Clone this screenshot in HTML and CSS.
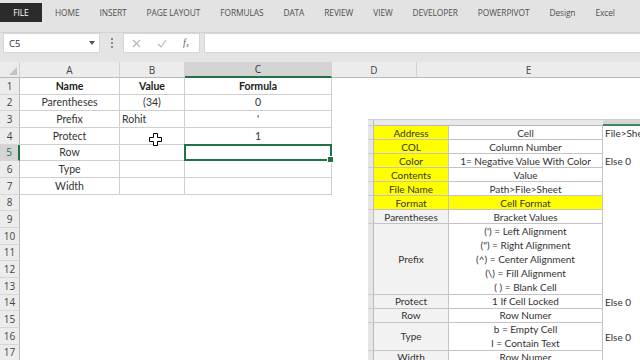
FILE: index.html
```html
<!DOCTYPE html>
<html>
<head>
<meta charset="utf-8">
<link rel="stylesheet" href="styles.css">
</head>
<body>
<div class="app">
  <div class="tabs">
    <div class="tab file">FILE</div>
    <div class="tab">HOME</div>
    <div class="tab">INSERT</div>
    <div class="tab">PAGE LAYOUT</div>
    <div class="tab">FORMULAS</div>
    <div class="tab">DATA</div>
    <div class="tab">REVIEW</div>
    <div class="tab">VIEW</div>
    <div class="tab">DEVELOPER</div>
    <div class="tab">POWERPIVOT</div>
    <div class="tab">Design</div>
    <div class="tab">Excel</div>
  </div>
  <div class="fbar">
    <div class="namebox"><span>C5</span><svg class="dd" width="6" height="4" viewBox="0 0 6 4"><path d="M0 0h6L3 4z" fill="#555"/></svg></div>
    <div class="dots"><span></span><span></span><span></span></div>
    <div class="fbtns">
      <svg width="9" height="9" viewBox="0 0 9 9"><path d="M1 1l7 7M8 1l-7 7" stroke="#b5b5b5" stroke-width="1.1"/></svg>
      <svg width="10" height="9" viewBox="0 0 10 9"><path d="M1 5l3 3 5-7" stroke="#b5b5b5" stroke-width="1.1" fill="none"/></svg>
      <span class="fx">f<sub>x</sub></span>
    </div>
    <div class="finput"></div>
  </div>
  <div class="sheet">
    <div class="grid">
      <div class="ch corner"><svg width="8" height="8" viewBox="0 0 8 8"><path d="M8 0v8H0z" fill="#c4c4c4"/></svg></div>
      <div class="ch">A</div>
      <div class="ch">B</div>
      <div class="ch sel">C</div>
      <div class="ch">D</div>
      <div class="ch last">E</div>

      <div class="rh">1</div>
      <div class="c t b">Name</div>
      <div class="c t b">Value</div>
      <div class="c t b">Formula</div>
      <div class="c"></div><div class="c"></div>

      <div class="rh">2</div>
      <div class="c t">Parentheses</div>
      <div class="c t">(34)</div>
      <div class="c t">0</div>
      <div class="c"></div><div class="c"></div>

      <div class="rh">3</div>
      <div class="c t">Prefix</div>
      <div class="c t l">Rohit</div>
      <div class="c t">'</div>
      <div class="c"></div><div class="c"></div>

      <div class="rh">4</div>
      <div class="c t">Protect</div>
      <div class="c t"></div>
      <div class="c t">1</div>
      <div class="c"></div><div class="c"></div>

      <div class="rh rsel">5</div>
      <div class="c t">Row</div>
      <div class="c t"></div>
      <div class="c t active"></div>
      <div class="c"></div><div class="c"></div>

      <div class="rh">6</div>
      <div class="c t">Type</div>
      <div class="c t"></div>
      <div class="c t"></div>
      <div class="c"></div><div class="c"></div>

      <div class="rh">7</div>
      <div class="c t">Width</div>
      <div class="c t"></div>
      <div class="c t"></div>
      <div class="c"></div><div class="c"></div>

      <div class="rh">8</div><div class="c"></div><div class="c"></div><div class="c"></div><div class="c"></div><div class="c"></div>
      <div class="rh">9</div><div class="c"></div><div class="c"></div><div class="c"></div><div class="c"></div><div class="c"></div>
      <div class="rh">10</div><div class="c"></div><div class="c"></div><div class="c"></div><div class="c"></div><div class="c"></div>
      <div class="rh">11</div><div class="c"></div><div class="c"></div><div class="c"></div><div class="c"></div><div class="c"></div>
      <div class="rh">12</div><div class="c"></div><div class="c"></div><div class="c"></div><div class="c"></div><div class="c"></div>
      <div class="rh">13</div><div class="c"></div><div class="c"></div><div class="c"></div><div class="c"></div><div class="c"></div>
      <div class="rh">14</div><div class="c"></div><div class="c"></div><div class="c"></div><div class="c"></div><div class="c"></div>
      <div class="rh">15</div><div class="c"></div><div class="c"></div><div class="c"></div><div class="c"></div><div class="c"></div>
      <div class="rh">16</div><div class="c"></div><div class="c"></div><div class="c"></div><div class="c"></div><div class="c"></div>
      <div class="rh">17</div><div class="c"></div><div class="c"></div><div class="c"></div><div class="c"></div><div class="c"></div>
    </div>

    <svg class="cursor" width="13" height="13" viewBox="0 0 13 13">
      <path d="M4.5 0.5h4v4h4v4h-4v4h-4v-4h-4v-4h4z" fill="#fff" stroke="#000" stroke-width="1"/>
    </svg>

    <div class="pic">
      <div class="pg">
        <div class="ps ph"></div><div class="ph"></div><div class="ph"></div><div class="ph ph3"></div>

        <div class="ps"></div><div class="p1 y">Address</div><div class="p2">Cell</div><div class="p3">File&gt;Sheet</div>
        <div class="ps"></div><div class="p1 y">COL</div><div class="p2">Column Number</div><div class="p3"></div>
        <div class="ps"></div><div class="p1 y">Color</div><div class="p2">1= Negative Value With Color</div><div class="p3">Else 0</div>
        <div class="ps"></div><div class="p1 y">Contents</div><div class="p2">Value</div><div class="p3"></div>
        <div class="ps"></div><div class="p1 y">File Name</div><div class="p2">Path&gt;File&gt;Sheet</div><div class="p3"></div>
        <div class="ps"></div><div class="p1 y">Format</div><div class="p2 y">Cell Format</div><div class="p3"></div>
        <div class="ps"></div><div class="p1 g">Parentheses</div><div class="p2">Bracket Values</div><div class="p3"></div>
        <div class="ps"></div><div class="p1 g">Prefix</div>
        <div class="p2 multi">
          <span>(') = Left Alignment</span>
          <span>(") = Right Alignment</span>
          <span>(^) = Center Alignment</span>
          <span>(\) = Fill Alignment</span>
          <span>( ) = Blank Cell</span>
        </div><div class="p3"></div>
        <div class="ps"></div><div class="p1 g">Protect</div><div class="p2">1 If Cell Locked</div><div class="p3">Else 0</div>
        <div class="ps"></div><div class="p1 g">Row</div><div class="p2">Row Numer</div><div class="p3"></div>
        <div class="ps"></div><div class="p1 g">Type</div>
        <div class="p2 multi"><span>b = Empty Cell</span><span>l = Contain Text</span></div><div class="p3">Else 0</div>
        <div class="ps"></div><div class="p1 g">Width</div><div class="p2">Row Numer</div><div class="p3"></div>
      </div>
    </div>
  </div>
</div>
</body>
</html>
```

FILE: styles.css
```css
* { box-sizing: border-box; }
html, body { margin: 0; padding: 0; }
body {
  width: 640px;
  height: 360px;
  overflow: hidden;
  background: #e4e4e4;
  font-family: "Open Sans", "Noto Sans", sans-serif;
}
.app { display: flex; flex-direction: column; height: 360px; }

.tabs {
  height: 33px;
  display: flex;
  align-items: flex-start;
  gap: 20px;
  padding-top: 3px;
  border-bottom: 1px solid #d2d2d2;
  background: #e3e3e3;
}
.tab {
  font-size: 8.4px;
  color: #505050;
  height: 19px;
  line-height: 19px;
  letter-spacing: -0.1px;
}
.tab.file {
  background: #2b2b2b;
  color: #fff;
  width: 42px;
  text-align: center;
  margin-right: -7px;
}

.fbar {
  display: flex;
  align-items: stretch;
  height: 20px;
  padding-left: 3px;
  margin-bottom: 9px;
}
.namebox {
  width: 97px;
  background: #fff;
  border: 1px solid #d6d6d6;
  display: flex;
  align-items: center;
  justify-content: space-between;
  padding: 0 4px 0 5px;
  font-size: 9.5px;
  color: #333;
}
.dots {
  width: 23px;
  display: flex;
  flex-direction: column;
  align-items: center;
  justify-content: center;
  gap: 2px;
}
.dots span { width: 2px; height: 2px; background: #8a8a8a; }
.fbtns {
  width: 77px;
  background: #fff;
  border: 1px solid #d6d6d6;
  display: flex;
  align-items: center;
  justify-content: space-between;
  padding: 0 10px 0 8px;
}
.fx {
  font-family: "Liberation Serif", serif;
  font-style: italic;
  font-size: 10px;
  color: #666;
}
.fx sub { font-size: 7px; vertical-align: -1px; }
.finput {
  flex: 1;
  margin-left: 4px;
  background: #fff;
  border-top: 1px solid #d6d6d6;
  border-bottom: 1px solid #d6d6d6;
  border-left: 1px solid #d6d6d6;
}

.sheet {
  flex: 1;
  position: relative;
  background: #fff;
  overflow: hidden;
}
.grid {
  display: grid;
  grid-template-columns: 20px 100px 65px 147px 85px 1fr;
  grid-template-rows: 16px repeat(17, 16.67px);
}
.ch {
  background: #ececec;
  border-right: 1px solid #d2d2d2;
  border-bottom: 1px solid #b9b9b9;
  display: flex;
  align-items: center;
  justify-content: center;
  font-size: 10px;
  color: #444;
}
.ch.last { border-right: none; }
.ch.corner { justify-content: flex-end; align-items: flex-end; padding: 0 2px 2px 0; }
.ch.sel {
  background: #d4d4d4;
  border-bottom: 2px solid #217346;
  color: #333;
}
.rh {
  background: #ececec;
  border-right: 1px solid #b9b9b9;
  border-bottom: 1px solid #d6d6d6;
  display: flex;
  align-items: center;
  justify-content: center;
  font-size: 10px;
  color: #444;
}
.rh.rsel {
  background: #d4d4d4;
  color: #217346;
  border-right: 2px solid #217346;
}
.c {
  display: flex;
  align-items: center;
  justify-content: center;
  font-family: Lato, "Open Sans", sans-serif;
  font-size: 10.5px;
  color: #333;
  white-space: nowrap;
}
.c.t {
  border-right: 1px solid #cfcfcf;
  border-bottom: 1px solid #cfcfcf;
}
.c.b { font-weight: 700; color: #222; }
.c.l { justify-content: flex-start; padding-left: 2px; }
.c.active { position: relative; }
.c.active::after {
  content: "";
  position: absolute;
  left: -1px; top: -1px; right: -1px; bottom: -1px;
  border: 2px solid #217346;
}
.c.active::before {
  content: "";
  position: absolute;
  right: -3px; bottom: -3px;
  width: 5px; height: 5px;
  background: #217346;
  border: 1px solid #fff;
  z-index: 2;
}

.cursor {
  position: absolute;
  left: 149px;
  top: 71px;
}

.pic {
  position: absolute;
  left: 368px;
  top: 57px;
  width: 272px;
  height: 250px;
  overflow: hidden;
  background: #fff;
}
.pg {
  display: grid;
  grid-template-columns: 6px 75px 154px 80px;
  grid-template-rows: 7px repeat(7, 14.06px) 70.3px 14.06px 14.06px 28.1px 14.06px;
  font-family: Lato, "Open Sans", sans-serif;
  font-size: 10px;
  color: #333;
}
.ph {
  background: #e9e9e9;
  border-top: 1px solid #cfcfcf;
  border-bottom: 1px solid #b9b9b9;
}
.ph3 { background: #d6d6d6; border-bottom: 2px solid #3f8a5e; }
.ps {
  background: #e6e6e6;
  border-right: 1px solid #bcbcbc;
  border-bottom: 1px solid #cdcdcd;
}
.p1, .p2 {
  display: flex;
  align-items: center;
  justify-content: center;
  border-right: 1px solid #c4c4c4;
  border-bottom: 1px solid #c4c4c4;
  white-space: nowrap;
}
.p2.multi { flex-direction: column; }
.p2.multi span { height: 14.06px; line-height: 14.06px; }
.p3 {
  display: flex;
  align-items: center;
  padding-left: 2px;
  white-space: nowrap;
}
.y { background: #ffff00; }
.g { background: #f2f2f2; }
```
